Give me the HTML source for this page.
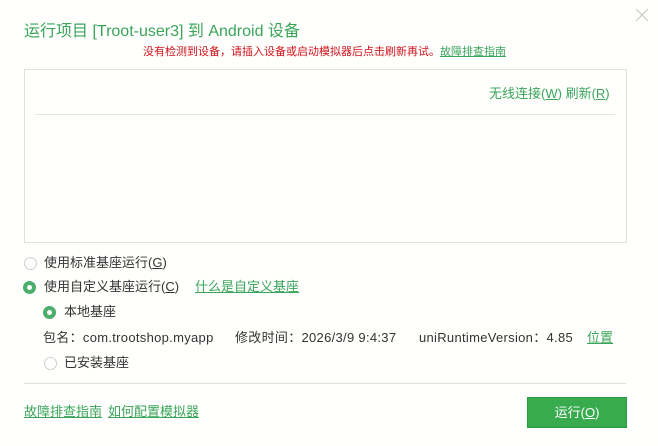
<!DOCTYPE html>
<html><head><meta charset="utf-8"><style>
html,body{margin:0;padding:0}
body{width:658px;height:446px;background:#fffffd;position:relative;overflow:hidden;font-family:"Liberation Sans","Noto Sans CJK SC",sans-serif;color:#333;font-size:13px}
.a{position:absolute;white-space:nowrap}
.g{color:#3aa45a}
.u{text-decoration:underline}
.r{position:absolute;width:11px;height:11px;border:1px solid #cfcfcf;border-radius:50%;background:#fff}
.rc{position:absolute;width:13px;height:13px;border-radius:50%;background:#4cae6c}
.rc:after{content:"";position:absolute;left:4px;top:4px;width:5px;height:5px;border-radius:50%;background:#fff}
</style></head><body>
<svg class="a" style="left:635px;top:8px" width="14" height="14"><path d="M1 1L13 13M13 1L1 13" stroke="#c8c8c8" stroke-width="1.2"/></svg>
<div class="a g" style="left:24px;top:22px;font-size:16px;line-height:20px">运行项目 [Troot-user3] 到 Android 设备</div>
<div class="a" style="left:143px;top:45px;font-size:11px;line-height:14px;color:#d0121b">没有检测到设备，请插入设备或启动模拟器后点击刷新再试。<span class="g u">故障排查指南</span></div>
<div class="a" style="left:24px;top:69px;width:601px;height:172px;border:1px solid #e0e0e0"></div>
<div class="a g" style="left:489px;top:85px;line-height:18px">无线连接(<span class="u">W</span>) 刷新(<span class="u">R</span>)</div>
<div class="a" style="left:35px;top:114px;width:580px;height:1px;background:#e4e4e4"></div>
<div class="r" style="left:24px;top:257px"></div>
<div class="a" style="left:44px;top:254px;line-height:18px">使用标准基座运行(<span class="u">G</span>)</div>
<div class="rc" style="left:23px;top:281px"></div>
<div class="a" style="left:44px;top:278px;line-height:18px">使用自定义基座运行(<span class="u">C</span>)</div>
<div class="a g u" style="left:195px;top:278px;line-height:18px">什么是自定义基座</div>
<div class="rc" style="left:43px;top:306px"></div>
<div class="a" style="left:64px;top:303px;line-height:18px">本地基座</div>
<div class="a" style="left:43px;top:329px;line-height:18px;letter-spacing:0.3px">包名：com.trootshop.myapp</div>
<div class="a" style="left:235px;top:329px;line-height:18px;letter-spacing:0.3px">修改时间：2026/3/9 9:4:37</div>
<div class="a" style="left:419px;top:329px;line-height:18px;letter-spacing:0.3px">uniRuntimeVersion：4.85</div>
<div class="a g u" style="left:587px;top:329px;line-height:18px">位置</div>
<div class="r" style="left:44px;top:357px"></div>
<div class="a" style="left:64px;top:354px;line-height:18px">已安装基座</div>
<div class="a" style="left:24px;top:383px;width:602px;height:1px;background:#e0e0e0"></div>
<div class="a g u" style="left:24px;top:403px;line-height:18px">故障排查指南</div>
<div class="a g u" style="left:108px;top:403px;line-height:18px">如何配置模拟器</div>
<div class="a" style="left:527px;top:397px;width:98px;height:29px;background:#37ab4e;border:1px solid #2a9a42;color:#fff;text-align:center;line-height:29px">运行(<span class="u">O</span>)</div>
</body></html>
